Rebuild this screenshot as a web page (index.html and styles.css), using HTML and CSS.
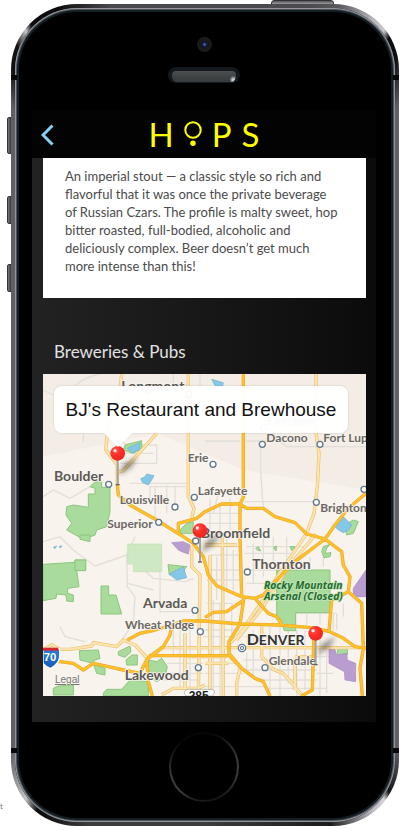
FILE: index.html
```
<!DOCTYPE html>
<html lang="en">
<head>
<meta charset="utf-8">
<meta name="viewport" content="width=device-width, initial-scale=1">
<title>Hops</title>
<link rel="stylesheet" href="styles.css">
</head>
<body>
<span class="stray">t</span>
<div class="device">
  <span class="key power"></span>
  <span class="key mute"></span>
  <span class="key volume-up"></span>
  <span class="key volume-down"></span>
  <div class="phone">
    <span class="band band-top"></span>
    <span class="band band-bottom"></span>
    <div class="bezel-top">
      <span class="camera"></span>
      <span class="speaker"></span>
    </div>
    <div class="screen">
      <header class="bar">
        <button class="back" type="button" aria-label="Back">
          <svg width="14" height="22" viewBox="0 0 14 22"><path d="M11.500 1.500 2 11l9.500 9.500" fill="none" stroke="#83d3f7" stroke-width="3"/></svg>
        </button>
        <h1 class="logo">
          <span>H</span>
          <svg width="18" height="26" viewBox="0 0 18 26" role="img" aria-label="O"><circle cx="9" cy="9" r="7.700" fill="none" stroke="#ff0" stroke-width="2"/><circle cx="9" cy="22.300" r="2.700" fill="#ff0"/></svg>
          <span>P</span>
          <span>S</span>
        </h1>
      </header>
      <main class="content">
        <p class="description">An imperial stout — a classic style so rich and<br>flavorful that it was once the private beverage<br>of Russian Czars. The profile is malty sweet, hop<br>bitter roasted, full-bodied, alcoholic and<br>deliciously complex. Beer doesn’t get much<br>more intense than this!</p>
        <h2 class="heading">Breweries &amp; Pubs</h2>
        <section class="map">
          <svg class="map-art" viewBox="9 12 969 966">
            <defs>
              <radialGradient id="ball" cx=".35" cy=".3" r=".8"><stop offset="0" stop-color="#ff5148"/><stop offset=".5" stop-color="#fb2c25"/><stop offset="1" stop-color="#e9231d"/></radialGradient>
              <linearGradient id="blue" x2="0" y2="1"><stop offset="0" stop-color="#2a83dc"/><stop offset="1" stop-color="#1559b4"/></linearGradient>
              <filter id="soft" x="-50%" y="-50%" width="200%" height="200%"><feGaussianBlur stdDeviation="8"/></filter>
              <g id="pin">
                <path d="M4 66 18 32l42-22-18 32z" fill="#333" opacity=".5" filter="url(#soft)"/>
                <path d="M0 10v84" stroke="#a5a29e" stroke-width="6"/>
                <path d="M-6 94H6" stroke="#66625e" stroke-width="4"/>
                <circle r="22" fill="url(#ball)"/>
                <circle cx="-8" cy="-8" r="5" fill="#fff" opacity=".9"/>
              </g>
              <circle id="town" r="9" fill="#fff" stroke="#61788f" stroke-width="4"/>
            </defs>
            <rect x="9" y="12" width="969" height="966" fill="#f8f3ec"/>
            <path class="shade" d="M9 12H978V360L610 300 350 190 9 260z"/>
            <!-- minor roads -->
            <g class="lane">
              <path d="M9 60 40 75M90 60Q130 20 180 12M400 12V60M480 12V50M9 380 40 360 90 385 150 350M130 215V190M210 190 260 225H350V280H240M250 250H340M270 340H440M245 385H330V350H440M345 350V450M380 345V430M405 420V350M9 515 60 500 100 540 165 588 260 555 340 625 435 635 460 625M285 500 260 555 262 650 285 680 280 760 245 810M360 580V730M360 725H450M262 640 340 660M60 770 75 800 135 815"/>
              <path d="M495 213H600M620 213H720L740 230H978M662 220V300L668 400M610 395H820M670 395V415M510 385V495M540 400V495M570 385V495M500 430H600M500 460H600M535 370 520 430M495 500H600M495 530H600M510 555H595M500 600H600M500 630H600M560 500V660M580 540V660M530 560V690M620 530H800M620 600H740M620 640H700M640 520V640M670 500V620M700 500V580M740 500V570M615 550H760M810 560V590M850 560V590M880 730V780M730 730H890V780M760 730V765M800 730V765M840 730V765"/>
              <path d="M400 770V860M420 770V960M450 760V960M520 690V978M540 700V978M575 700V810M500 700H580M495 780H600M495 800H580M495 880H600M495 910H610M495 950H680M620 850V910M640 780V920M690 770V970M720 770V978M745 770V940M770 780V978M795 780V960M840 780V978M860 840V970M610 800H760M610 870H800M620 900H830M650 930H830M680 955H860M380 880H490M380 910H490M370 930H470M910 700V740M820 860H900M830 910H880"/>
            </g>
            <!-- parks -->
            <g class="park">
              <path d="M150 350 165 335H185V352H210V425L200 470 170 480 165 495 130 508 80 480 95 460 78 435 80 410 100 405 145 412V372H165V355z"/>
              <path d="M250 240 255 225 305 212V235L280 250z"/><path d="M420 480 440 460 460 455 458 490H420z"/>
              <path d="M120 495H150V515L120 508z"/><path d="M9 583 105 577V570H137V600H110L117 650 83 655V670L100 675V695L80 693 78 675 50 672 48 685 9 692z"/>
              <path d="M105 570H137V602H105z"/><path d="M183 648H206V675H228L245 732H183z"/>
              <path d="M384 584 440 590 425 610 400 605 388 615z"/><path d="M118 842 175 840 180 865 160 872 165 885 195 895V915L170 910 160 880 120 870z"/>
              <path d="M235 845 270 828 273 845 255 862 235 855zM258 870 275 855H292V885H260z"/>
              <path d="M325 870 350 875 365 865 382 890 375 920 350 935 328 920zM40 955 55 948 100 945V975H40zM190 970 200 958H245L270 930 325 935V978H190z"/>
              <path d="M710 600H870V728H767V782H733L722 750 710 748z"/><path d="M893 835H922V855H893z"/>
              <path d="M913 465 940 450 955 455 940 490 920 495zM850 530 870 523 860 535 855 550 873 548 870 560 852 563 845 545z"/>
              <path d="M647 535 655 530 662 543 652 540zM700 532 710 528 708 543zM750 530H765L755 542z"/>
            </g>
            <path class="pale-park" d="M263 522H365V605H280V582H263z"/>
            <g class="water">
              <path d="M262 235 300 218 297 240 275 248z"/><path d="M302 326 315 320 320 312 342 317 335 330 325 345 308 338z"/>
              <path d="M515 28 550 38 545 60 527 50z"/><path d="M387 612 430 590 440 623 410 630z"/>
              <path d="M885 470 910 440 935 465 925 480 910 488 895 480zM40 532 50 528 45 536zM57 530 65 527 62 534z"/>
            </g>
            <path class="lilac" d="M395 518 430 515 450 525 445 552 425 545 415 540zM978 600 940 655 940 680H978zM867 837 885 838 890 855 920 850 922 870 947 880V935L915 930 913 905 867 880z"/>
            <!-- secondary roads, cased -->
            <defs>
              <path id="sec" d="M245 12 240 60 205 160 197 240 232 285V345M445 12V380L462 415 455 445M350 190 250 302 233 308M828 12V190L837 250 832 350 822 430 800 490 705 630 655 710 600 790 565 825M828 492 745 590 670 710 590 810M9 840 35 825 60 838 90 838 155 828 160 818 230 830 250 810 285 825 325 868M455 525V590L480 615 475 978M510 555V978M547 495 550 978M495 525H590M330 857 365 833H978M435 790V955M430 860H560M365 975 400 955H475L495 945M495 880H565M665 770V860L700 898 730 910 785 975M765 860H815M765 865V960M590 935V978M600 895 590 940"/>
            </defs>
            <g class="road-case"><use href="#sec"/></g>
            <g class="road-mid"><use href="#sec"/></g>
            <g class="road-core"><use href="#sec"/></g>
            <!-- highways -->
            <defs>
              <path id="hwy" d="M610 12V382L600 402V500L605 678 612 682 600 762 567 815V850L605 895 645 925 670 935 690 978M232 345 235 375 270 405 350 450 410 488 430 500 460 520 490 560 505 615 530 647 605 680 645 685 685 730 710 740 725 762M415 488V460L470 445 495 425 545 402H600L620 415H670L705 440 765 458 800 492 855 507 905 545 910 585 930 620 925 665 965 700 970 835 960 895 967 978M990 360 925 415 885 465 855 507 765 575 705 635 670 675 645 685M9 870 60 875 100 880 130 900 160 880 205 890 250 900 300 910 320 870 370 830 390 795 395 765 430 753H495L600 762 715 765 815 773 870 785 910 805 945 830 978 835M320 870 330 857H567L605 895M320 870 325 935 337 978M262 810 300 790 345 780 395 765M495 742 520 727 560 725 612 690M925 665 875 690 867 785M822 785 817 960 785 978"/>
            </defs>
            <g class="highway-case"><use href="#hwy"/></g>
            <g class="highway"><use href="#hwy"/></g>
            <g>
              <use href="#town" x="206" y="343"/><use href="#town" x="405" y="411"/><use href="#town" x="356" y="457"/><use href="#town" x="463" y="382"/><use href="#town" x="519" y="283"/><use href="#town" x="667" y="223"/><use href="#town" x="840" y="223"/><use href="#town" x="829" y="397"/><use href="#town" x="972" y="358"/><use href="#town" x="467" y="513"/><use href="#town" x="622" y="606"/><use href="#town" x="465" y="721"/><use href="#town" x="481" y="785"/><use href="#town" x="475" y="893"/><use href="#town" x="675" y="893"/><use href="#town" x="672" y="172"/><use href="#town" x="447" y="72"/>
              <circle cx="606" cy="834" r="11" fill="#fff" stroke="#61788f" stroke-width="4"/><circle cx="606" cy="834" r="5" fill="#dce5ee" stroke="#61788f" stroke-width="3"/>
            </g>
            <g class="label">
              <text class="city" x="42" y="334">Boulder</text>
              <text x="239" y="403">Louisville</text>
              <text x="202" y="475">Superior</text>
              <text x="443" y="275">Erie</text>
              <text x="473" y="376">Lafayette</text>
              <text x="679" y="215">Dacono</text>
              <text x="850" y="215">Fort Lup</text>
              <text x="841" y="425">Brighton</text>
              <text class="city" x="483" y="503">Broomfield</text>
              <text class="city" x="637" y="597">Thornton</text>
              <text class="city" x="309" y="713">Arvada</text>
              <text x="255" y="778">Wheat Ridge</text>
              <text class="city" x="254" y="931">Lakewood</text>
              <text x="686" y="885">Glendale</text>
              <text x="244" y="64" class="city">Longmont</text>
              <text x="680" y="164">Firestone</text>
              <text class="capital" x="620" y="824">D<tspan class="small">ENVER</tspan></text>
              <text class="reserve" x="672" y="656">Rocky Mountain</text>
              <text class="reserve" x="672" y="690">Arsenal (Closed)</text>
            </g>
            <path d="M9 835H58Q62 865 53 877 45 888 32 896 15 888 9 880z" fill="url(#blue)" stroke="#fff" stroke-width="4"/>
            <path d="M9 833H55V842H9z" fill="#d8262c"/>
            <text class="shield" x="11" y="874">70</text>
            <path d="M440 978Q425 970 440 958H516Q532 965 515 978z" fill="#fff" stroke="#999" stroke-width="2"/>
            <text class="route" x="446" y="990">285</text>
            <use href="#pin" x="233" y="250"/>
            <use href="#pin" x="480" y="482"/>
            <use href="#pin" x="827" y="790"/>
          </svg>
          <a class="legal" href="#legal">Legal</a>
          <button class="callout" type="button">BJ's Restaurant and Brewhouse</button>
        </section>
      </main>
    </div>
    <div class="bezel-bottom">
      <button class="home" type="button" aria-label="Home"></button>
    </div>
  </div>
</div>
</body>
</html>
```

FILE: styles.css
```
* {
  box-sizing: border-box;
}

body {
  margin: 0;
  background: #fff;
  font-family: Lato, "Open Sans", sans-serif;
}

.stray {
  position: absolute;
  top: 800px;
  left: 0;
  font-size: 8px;
  line-height: 12px;
  color: #777;
}

.device {
  position: relative;
  padding: 4px 1px 3px 11px;
}

.key {
  position: absolute;
  left: 7px;
  width: 5px;
  height: 28px;
  border: 1px solid #333;
  border-radius: 2px 0 0 2px;
  background: linear-gradient(90deg, #77777c, #38383c);
}

.mute { top: 117px; height: 37px; }
.volume-up { top: 196px; }
.volume-down { top: 264px; }

.power {
  top: 0;
  left: auto;
  right: 66px;
  width: 63px;
  height: 6px;
  border-radius: 3px 3px 0 0;
  background: linear-gradient(#55555a, #b5b5b9);
}

.phone {
  position: relative;
  padding: 0 19px 0 17px;
  border: 4px solid transparent;
  border-radius: 66px;
  background:
    linear-gradient(#000, #000) padding-box,
    conic-gradient(
      #4a4a4f 0 14deg, #58585c 18deg, #b5b5ba 23deg, #c8c8cc 25deg, #0c0c0e 26deg 28deg, #5f5f64 32deg,
      #5f5f64 150deg, #141416 154deg, #d2d2d5 155deg, #bdbdc1 157deg, #1c1c1e 163deg,
      #3c3c40 180deg 196deg, #0c0c0e 202deg 203deg, #c2c2c6 205deg, #5f5f64 210deg,
      #5f5f64 328deg, #101012 331deg 333deg, #c8c8cc 335deg, #0c0c0e 336deg 340deg, #4a4a4f 347deg) border-box;
  box-shadow:
    inset 0 0 0 1px #94949a,
    inset 0 0 0 2px #4c5359,
    inset 0 0 0 4px #141d21;
}

.band {
  position: absolute;
  left: -4px;
  right: -4px;
  height: 5px;
  border: solid #08080a;
  border-width: 0 6px;
}

.band-top { top: 67px; }
.band-bottom { bottom: 69px; }

.bezel-top {
  display: flex;
  flex-direction: column;
  align-items: center;
  gap: 15px;
  height: 102px;
  padding-top: 29px;
}

.camera {
  width: 15px;
  height: 15px;
  border-radius: 50%;
  background: radial-gradient(circle, #3856a5 0 1px, #101832 2px 3px, #181819 4px, #202021);
}

.speaker {
  width: 72px;
  height: 16px;
  border: 4px solid #13191c;
  border-bottom-width: 1px;
  border-radius: 8px;
  background:
    radial-gradient(circle at 96% 80%, #c8c8c8 0 1px, transparent 4px),
    linear-gradient(#4c4e50, #3e4143 60%, #343b3f);
}

.screen {
  background: linear-gradient(90deg, #222, #151515 60%, #0b0b0b);
}

.bar {
  display: grid;
  grid-template-columns: 32px 1fr 32px;
  align-items: center;
  height: 48px;
  background: #030303;
}

.back {
  display: flex;
  padding: 2px 0 0 9px;
  border: 0;
  background: none;
}

.logo {
  display: flex;
  justify-content: center;
  align-items: center;
  gap: 10px;
  margin: 0;
  color: #ff0;
  font-size: 33px;
  font-weight: 400;
  line-height: 48px;
}

.content {
  padding: 0 10px 26px 11px;
}

.description {
  margin: 0;
  padding: 9px 22px 23px;
  background: #fff;
  color: #4b4b4b;
  font-size: 13px;
  line-height: 18px;
  white-space: nowrap;
}

.heading {
  margin: 0;
  padding: 42px 11px 10px;
  color: #e2e2e2;
  font-size: 17px;
  font-weight: 400;
  line-height: 24px;
}

.map {
  position: relative;
  overflow: hidden;
}

.map-art {
  display: block;
  width: 100%;
}

.shade { fill: #ede7df; opacity: .45; }
.lane { fill: none; stroke: #e2dfd8; stroke-width: 4; }
.park { fill: #a9db9c; stroke: #8cc67e; stroke-width: 3; }
.pale-park { fill: #cfe8c4; stroke: #c2dfb6; stroke-width: 2; }
.water { fill: #84c8e9; stroke: #72aec8; stroke-width: 2; }
.lilac { fill: #b99cd0; stroke: #a88bc0; stroke-width: 2; }

.road-case,
.road-mid,
.road-core,
.highway,
.highway-case {
  fill: none;
  stroke-linejoin: round;
}

.road-case { stroke: #edc168; stroke-width: 10; }
.road-mid { stroke: #fbe9bd; stroke-width: 6; }
.road-core { stroke: #f5d58a; stroke-width: 1; }
.highway-case { stroke: #e7a52b; stroke-width: 10; }
.highway { stroke: #ffc02a; stroke-width: 7; }

.label {
  fill: #6a6864;
  stroke: #faf6ef;
  stroke-width: 5;
  stroke-linejoin: round;
  paint-order: stroke;
  font-size: 36px;
  font-weight: 700;
}

.city { fill: #5b5956; font-size: 42px; }
.capital { fill: #333; font-size: 48px; }
.small { font-size: 42px; }

.reserve {
  fill: #216b2d;
  stroke: #c5e6b9;
  font-family: "Open Sans", sans-serif;
  font-size: 31px;
  font-style: italic;
}

.shield {
  fill: #fff;
  font-family: "Liberation Sans", sans-serif;
  font-size: 34px;
  font-weight: 700;
}

.route {
  fill: #222;
  font-family: "Liberation Sans", sans-serif;
  font-size: 36px;
  font-weight: 700;
}

.legal {
  position: absolute;
  bottom: 8px;
  left: 12px;
  color: #777;
  font: 10px/16px "Liberation Sans", sans-serif;
}

.callout {
  position: absolute;
  top: 12px;
  left: 11px;
  right: 18px;
  height: 47px;
  padding: 0;
  border: 0;
  border-radius: 8px;
  background: rgba(255, 255, 255, .96);
  box-shadow: 0 0 2px rgba(0, 0, 0, .2);
  color: #111;
  font: 19px/47px "Liberation Sans", sans-serif;
  white-space: nowrap;
}

.callout::after {
  content: "";
  position: absolute;
  top: 100%;
  left: 50px;
  border: 14px solid transparent;
  border-top-color: rgba(255, 255, 255, .96);
  border-bottom: 0;
}

.bezel-bottom {
  display: flex;
  justify-content: center;
  height: 100px;
  padding-top: 10px;
}

.home {
  width: 70px;
  height: 70px;
  padding: 0;
  border: 2px solid transparent;
  border-radius: 50%;
  background:
    linear-gradient(#000, #000) padding-box,
    linear-gradient(165deg, #060606 15%, #3b3b3e 50%, #3b3b3e 70%, #0b0b0b 95%) border-box;
}
```
